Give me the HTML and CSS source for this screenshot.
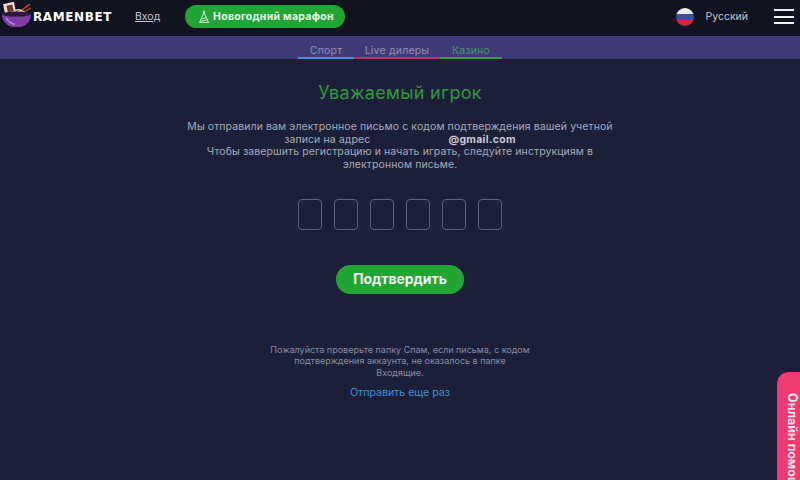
FILE: index.html
```html
<!DOCTYPE html>
<html>
<head>
    <title>Ramenbet</title>
    <link rel="stylesheet" href="styles.css">
</head>
<body>
    <header class="topbar">
        <a class="logo">
            <svg class="logo-bowl" width="31" height="28" viewBox="0 0 31 28">
                <rect x="3" y="2" width="11" height="10" fill="#e8e4dc" transform="rotate(-12 8 7)"/>
                <rect x="6" y="4" width="6" height="7" fill="#6b3a2a" transform="rotate(-12 9 7)"/>
                <path d="M17 12 L29 3" stroke="#d8452f" stroke-width="1.5"/>
                <path d="M19 13 L30 7" stroke="#d8452f" stroke-width="1.2"/>
                <path d="M12 13 Q16 5 24 12 M14 13 Q18 8 22 13" fill="none" stroke="#e6c9a8" stroke-width="1.6"/>
                <ellipse cx="15.5" cy="13" rx="14.5" ry="2.5" fill="#2c1a3e"/>
                <path d="M1 13.5 Q4 15.5 15.5 15.5 Q27 15.5 30 13.5 Q30 23 20 26 H11 Q1 23 1 13.5Z" fill="#7b3fa3"/>
                <path d="M5 17 Q8 22 14 23.5" fill="none" stroke="#b784d6" stroke-width="1.6"/>
            </svg>
            <span class="logo-text">RAMENBET</span>
        </a>
        <a class="login">Вход</a>
        <a class="promo">
            <svg width="12" height="14" viewBox="0 0 12 14">
                <circle cx="6" cy="1.8" r="1" fill="#d6f0d6"/>
                <path d="M6 2.5 L10.5 12.5 H1.5 Z" fill="none" stroke="#d6f0d6" stroke-width="1"/>
                <path d="M3.5 9 L8.5 7.5 M2.8 11 L9.5 10" stroke="#d6f0d6" stroke-width="0.9"/>
            </svg>
            Новогодний марафон
        </a>
        <div class="lang">
            <span class="flag"></span>
            <span class="lang-name">Русский</span>
        </div>
        <button class="burger"><span></span><span></span><span></span></button>
    </header>

    <nav class="subnav">
        <a class="tab tab-sport">Спорт</a>
        <a class="tab tab-live">Live дилеры</a>
        <a class="tab tab-casino">Казино</a>
    </nav>

    <main class="content">
        <h1 class="title">Уважаемый игрок</h1>
        <p class="message">
            Мы отправили вам электронное письмо с кодом подтверждения вашей учетной записи на адрес <span class="email-gap"></span><b>@gmail.com</b><br>
            Чтобы завершить регистрацию и начать играть, следуйте инструкциям в электронном письме.
        </p>
        <div class="code-row">
            <span class="code-cell"></span>
            <span class="code-cell"></span>
            <span class="code-cell"></span>
            <span class="code-cell"></span>
            <span class="code-cell"></span>
            <span class="code-cell"></span>
        </div>
        <button class="confirm">Подтвердить</button>
        <p class="note">Пожалуйста проверьте папку Спам, если письма, с кодом подтверждения аккаунта, не оказалось в папке Входящие.</p>
        <a class="resend">Отправить еще раз</a>
    </main>

    <div class="help">Онлайн помощь</div>
</body>
</html>
```

FILE: styles.css
```css
html, body {
    height: 100%;
}
body {
    margin: 0;
    width: 800px;
    height: 480px;
    overflow: hidden;
    position: relative;
    background: #1b1f38;
    font-family: 'Inter', 'DejaVu Sans', sans-serif;
    color: #a9abb9;
}
.topbar {
    height: 36px;
    box-sizing: border-box;
    padding-bottom: 3px;
    background: #11131f;
    display: flex;
    align-items: center;
}
.logo {
    display: flex;
    align-items: center;
    margin-left: 1px;
    width: 134px;
}
.logo-bowl {
    margin-bottom: 3px;
    margin-right: 1px;
}
.logo-text {
    font-family: 'DejaVu Sans', sans-serif;
    font-weight: 700;
    font-size: 12px;
    letter-spacing: 0.6px;
    color: #fff;
}
.login {
    font-size: 10.5px;
    color: #c5c6cf;
    text-decoration: underline;
    width: 50px;
}
.promo {
    width: 160px;
    height: 23px;
    border-radius: 12px;
    background: #23a535;
    color: #e8f6e8;
    font-weight: 700;
    font-size: 10.5px;
    letter-spacing: 0.3px;
    display: flex;
    align-items: center;
    gap: 3px;
    padding-left: 13px;
    box-sizing: border-box;
}
.lang {
    margin-left: auto;
    display: flex;
    align-items: center;
    gap: 11px;
    font-size: 10.5px;
    color: #c5c6cf;
}
.flag {
    width: 18px;
    height: 18px;
    border-radius: 50%;
    background: linear-gradient(#f2f2f6 0 33%, #3d4f9f 33% 66%, #d3263a 66%);
}
.burger {
    width: 20px;
    height: 15px;
    margin: 0 6px 0 26px;
    padding: 0;
    border: none;
    background: none;
    display: flex;
    flex-direction: column;
    justify-content: space-between;
}
.burger span {
    display: block;
    height: 2px;
    background: #eee;
}
.subnav {
    height: 23px;
    background: #413a78;
    display: flex;
    justify-content: center;
}
.tab {
    box-sizing: border-box;
    padding-top: 9px;
    height: 23px;
    line-height: 12px;
    text-align: center;
    font-size: 10.5px;
    color: #8f8fb3;
    border-bottom: 2px solid;
    letter-spacing: 0.2px;
}
.tab-sport {
    width: 56px;
    border-color: #3c93dc;
}
.tab-live {
    width: 86px;
    border-color: #c92a6b;
}
.tab-casino {
    width: 62px;
    color: #3f9a66;
    border-color: #23a04a;
}
.content {
    display: flex;
    flex-direction: column;
    align-items: center;
}
.title {
    margin: 23px 0 0;
    font-size: 18px;
    line-height: 22px;
    font-weight: 400;
    color: #2f9a42;
    letter-spacing: 0.3px;
}
.message {
    margin: 17px 0 0;
    width: 432px;
    text-align: center;
    font-size: 10.5px;
    line-height: 12.7px;
    letter-spacing: 0.1px;
}
.message b {
    color: #c9cad4;
    letter-spacing: 0.3px;
}
.email-gap {
    display: inline-block;
    width: 75px;
}
.code-row {
    margin-top: 27px;
    display: flex;
    gap: 12px;
}
.code-cell {
    width: 24px;
    height: 31px;
    border: 1px solid #5d6079;
    border-radius: 4px;
    box-sizing: border-box;
}
.confirm {
    margin-top: 35px;
    width: 128px;
    height: 29px;
    border: none;
    border-radius: 15px;
    background: #23a535;
    color: #f2f7f2;
    font-family: inherit;
    font-weight: 700;
    font-size: 13.9px;
}
.note {
    margin: 50px 0 0;
    width: 261px;
    text-align: center;
    font-size: 9px;
    line-height: 11.5px;
    color: #8a8ca0;
}
.resend {
    margin-top: 8px;
    font-size: 10.6px;
    line-height: 13px;
    color: #3b8fd6;
}
.help {
    position: absolute;
    left: 777px;
    top: 372px;
    width: 30px;
    height: 108px;
    overflow: hidden;
    box-sizing: border-box;
    border-radius: 12px 0 0 0;
    background: #f23a72;
    color: #f6e3ea;
    font-weight: 700;
    font-size: 12.5px;
    writing-mode: vertical-rl;
    white-space: nowrap;
    padding-top: 21px;
    line-height: 30px;
}
```
